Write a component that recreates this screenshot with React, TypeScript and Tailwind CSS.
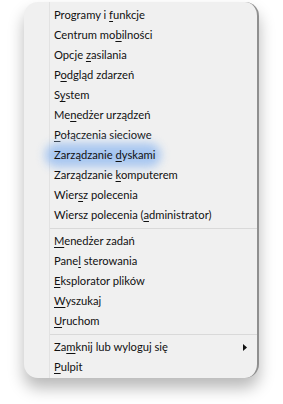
import React from 'react';

type Item = { pre: string; key: string; post: string; glow?: boolean; arrow?: boolean };

const groups: Item[][] = [
  [
    { pre: 'Programy i ', key: 'f', post: 'unkcje' },
    { pre: 'Centrum mo', key: 'b', post: 'ilności' },
    { pre: 'Opcje ', key: 'z', post: 'asilania' },
    { pre: 'P', key: 'o', post: 'dgląd zdarzeń' },
    { pre: 'S', key: 'y', post: 'stem' },
    { pre: 'Me', key: 'n', post: 'edżer urządzeń' },
    { pre: '', key: 'P', post: 'ołączenia sieciowe' },
    { pre: 'Zarządzanie ', key: 'd', post: 'yskami', glow: true },
    { pre: 'Zarządzanie ', key: 'k', post: 'omputerem' },
    { pre: 'Wier', key: 's', post: 'z polecenia' },
    { pre: 'Wiersz polecenia (', key: 'a', post: 'dministrator)' },
  ],
  [
    { pre: '', key: 'M', post: 'enedżer zadań' },
    { pre: 'Pane', key: 'l', post: ' sterowania' },
    { pre: '', key: 'E', post: 'ksplorator plików' },
    { pre: '', key: 'W', post: 'yszukaj' },
    { pre: '', key: 'U', post: 'ruchom' },
  ],
  [
    { pre: 'Za', key: 'm', post: 'knij lub wyloguj się', arrow: true },
    { pre: '', key: 'P', post: 'ulpit' },
  ],
];

function MenuRow({ item }: { item: Item }) {
  return (
    <div className="relative flex h-[20px] items-center pl-[4px] pr-[10px]">
      {item.glow && (
        <span className="absolute left-[-5px] top-[-2px] h-[24px] w-[116px] rounded-full bg-[#9fc2f1] opacity-90 blur-[5px]" />
      )}
      <span className="relative whitespace-nowrap">
        {item.pre}
        <span className="underline decoration-1 underline-offset-[2px]">{item.key}</span>
        {item.post}
      </span>
      {item.arrow && (
        <svg className="absolute right-[10px] top-[7px]" width="4" height="7" viewBox="0 0 4 7">
          <path d="M0 0 L4 3.5 L0 7 Z" fill="#111" />
        </svg>
      )}
    </div>
  );
}

export default function App() {
  return (
    <div className="h-[404px] w-[283px] bg-white pl-[24px] pt-[2px]">
      <div
        className="relative flex h-[376px] w-[235px] overflow-hidden rounded-[14px] border-r-[2px] border-[#8f8f8f] bg-[#f0f0f0] shadow-[0_10px_16px_rgba(0,0,0,0.28)]"
        style={{ fontFamily: 'Lato, "Noto Sans", sans-serif' }}
      >
        <div className="w-[26px] shrink-0 border-r border-[#e2e2e2]" />
        <div className="flex-1 pt-[3px] text-[11.2px] text-[#111]">
          {groups.map((g, gi) => (
            <div key={gi}>
              {gi > 0 && (
                <div className="flex h-[6px] items-center">
                  <div className="h-[1px] w-full bg-[#d9d9d9]" />
                </div>
              )}
              {g.map((item, i) => (
                <MenuRow key={i} item={item} />
              ))}
            </div>
          ))}
        </div>
      </div>
    </div>
  );
}
